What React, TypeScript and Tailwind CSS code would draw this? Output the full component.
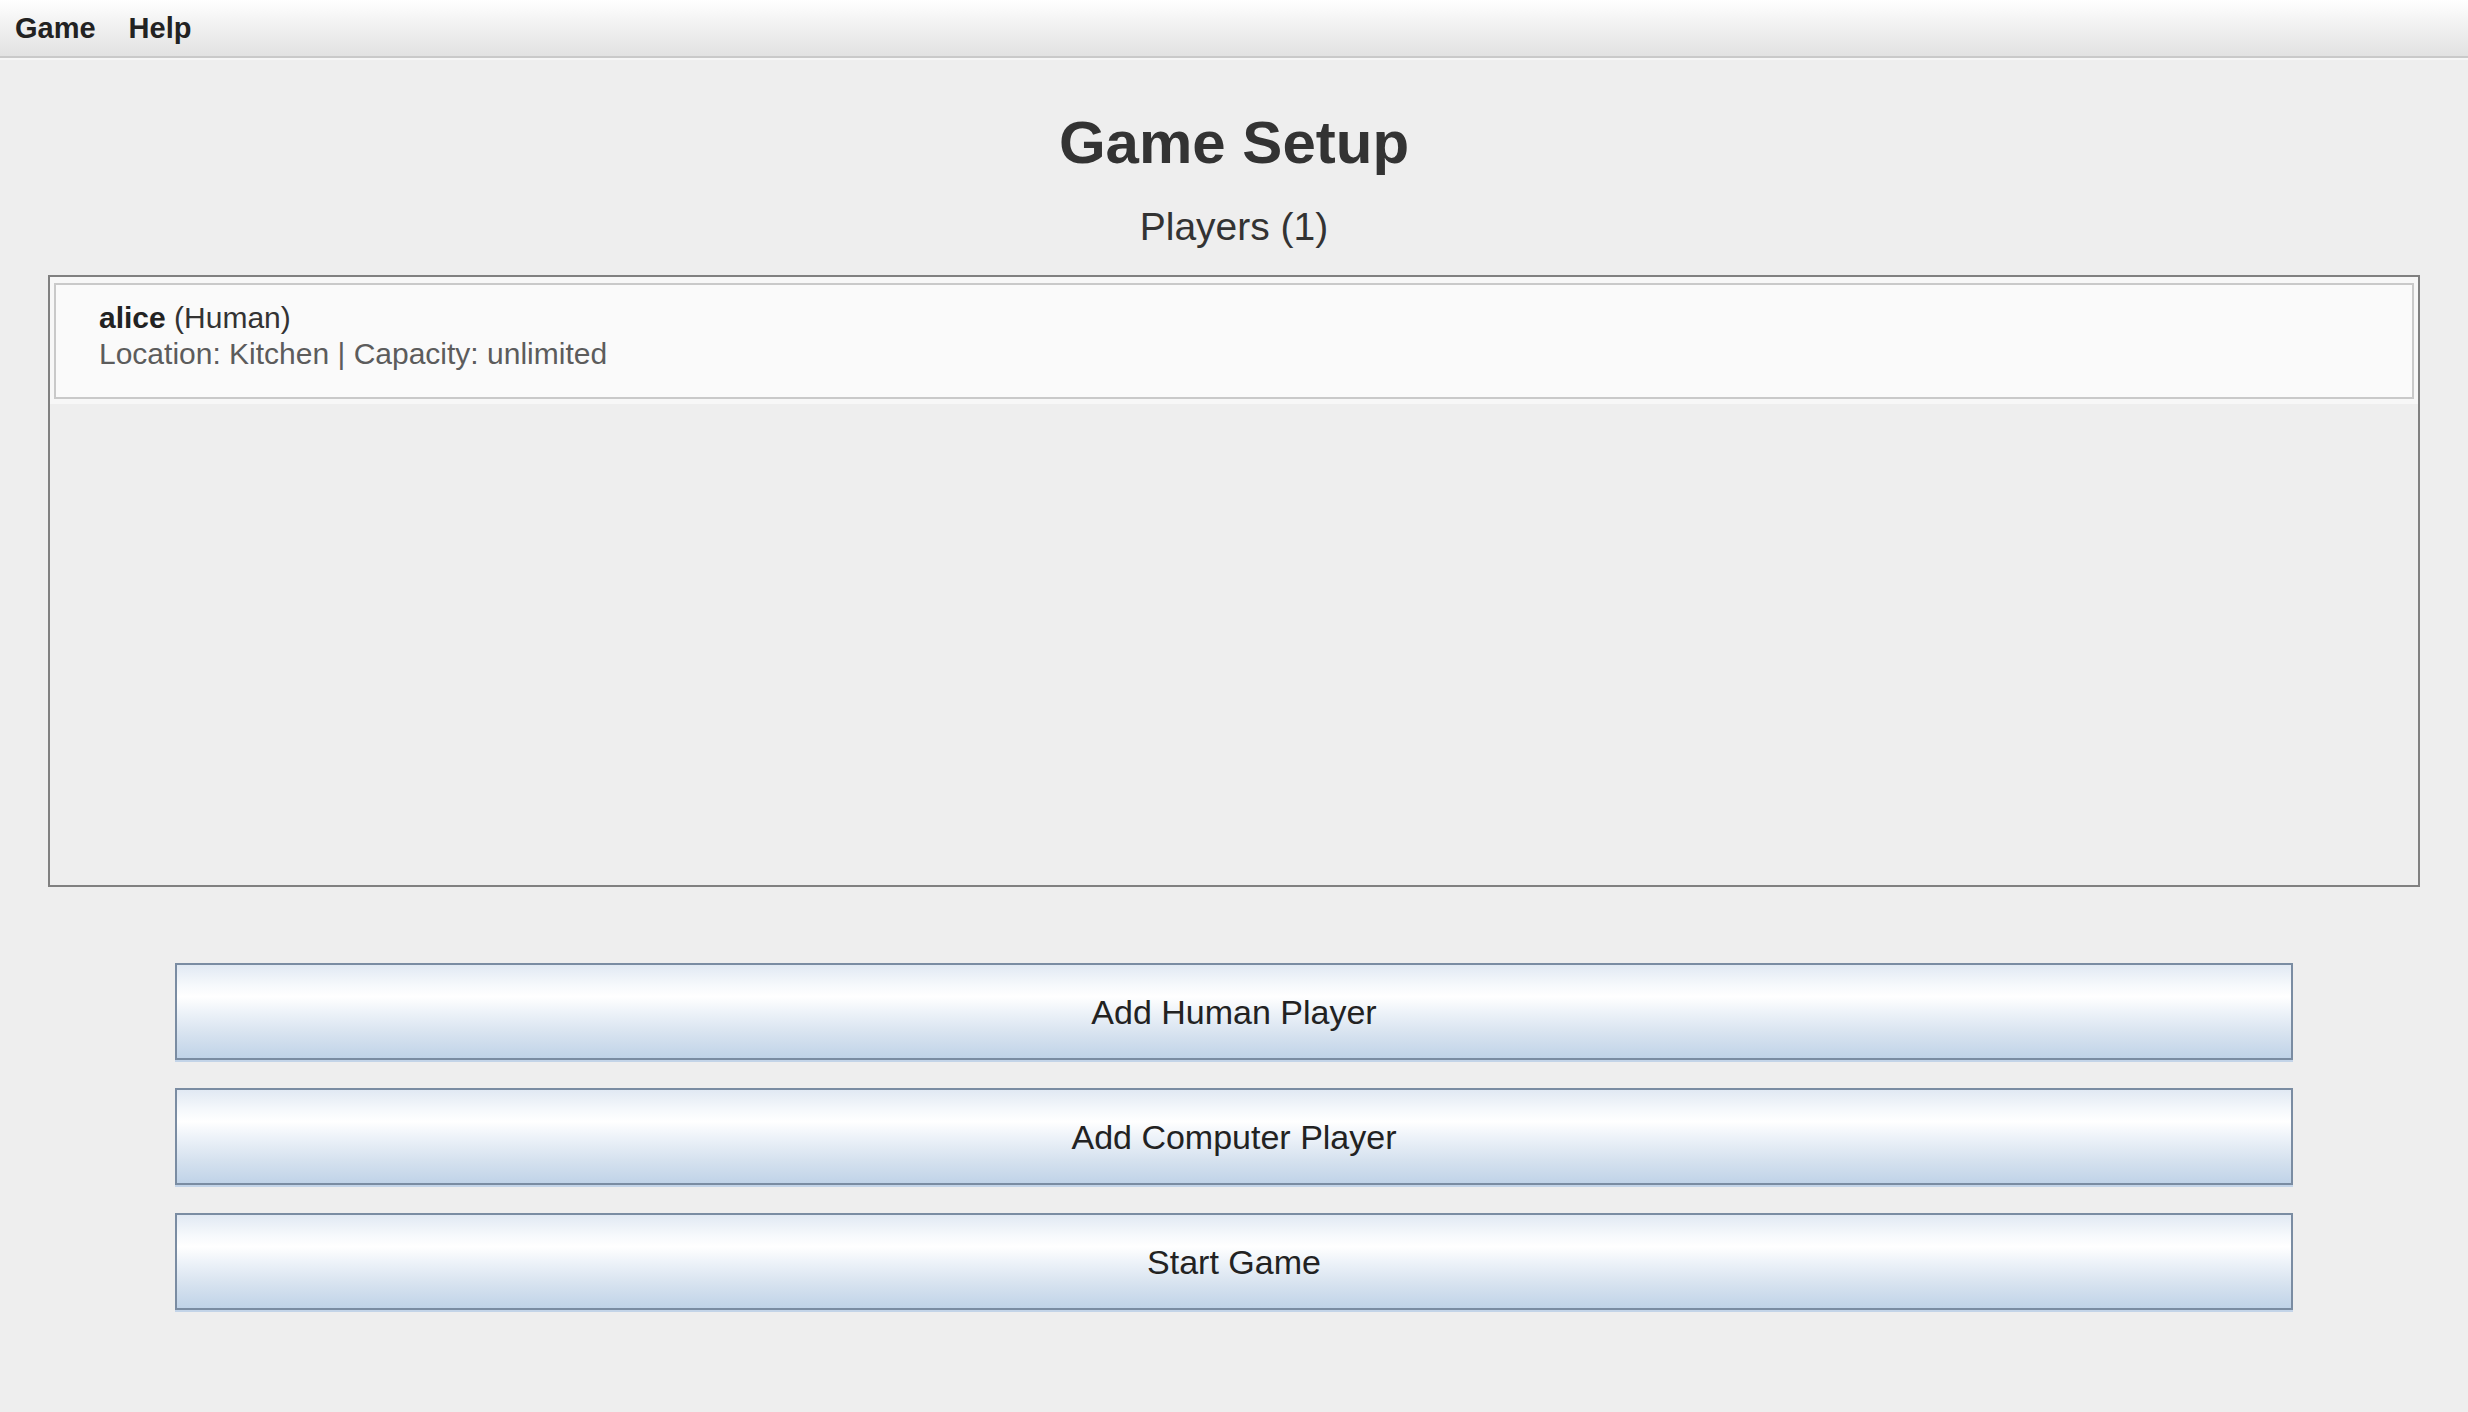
const players = [{ name: "alice", kind: "Human", location: "Kitchen", capacity: "unlimited" }];

const actions = ["Add Human Player", "Add Computer Player", "Start Game"];

export default function App() {
  return (
    <div className="min-h-[1412px] w-full bg-[#eeeeee] font-['Liberation_Sans',Arial,sans-serif] text-[#333333]">
      <div className="h-[58px] flex items-center gap-[33px] pl-[15px] bg-[linear-gradient(to_bottom,#ffffff_0%,#f1f1f1_45%,#e2e2e2_100%)] border-b-2 border-[#c9c9c9] shadow-[0_2px_0_#f6f6f6]">
        <span className="text-[29px] leading-none font-bold text-[#222222]">Game</span>
        <span className="text-[29px] leading-none font-bold text-[#222222]">Help</span>
      </div>

      <div className="flex flex-col items-center">
        <h1 className="mt-[55px] text-[60px] leading-none font-bold text-[#333333]">Game Setup</h1>
        <h2 className="mt-[34px] text-[39px] leading-none text-[#333333]">Players ({players.length})</h2>
      </div>

      <div className="mx-[48px] mt-[29px] h-[612px] border-2 border-[#808080] bg-[#eeeeee]">
        {players.map((p) => (
          <div key={p.name} className="bg-[#f7f7f7] px-[4px] pt-[6px] pb-[5px]">
            <div className="border-2 border-[#c9c9c9] bg-[#fafafa] pl-[43px] pt-[15px] pb-[25px] text-[30px] leading-[36px]">
              <div className="text-[#333333]">
                <span className="font-bold text-[#222222]">{p.name}</span> ({p.kind})
              </div>
              <div className="text-[#5c5c5c]">
                Location: {p.location} | Capacity: {p.capacity}
              </div>
            </div>
          </div>
        ))}
      </div>

      <div className="mx-[175px] mt-[76px] flex flex-col gap-[28px]">
        {actions.map((label) => (
          <button
            key={label}
            className="h-[97px] w-full border-2 border-[#7a8ca2] bg-[linear-gradient(to_bottom,#e1e9f3_0%,#f6f9fc_22%,#ffffff_34%,#eef3f9_50%,#d6e2ef_75%,#c0d3e8_100%)] shadow-[0_2px_0_#c3d4e8] text-[34px] leading-none text-[#222222]"
          >
            {label}
          </button>
        ))}
      </div>
    </div>
  );
}
